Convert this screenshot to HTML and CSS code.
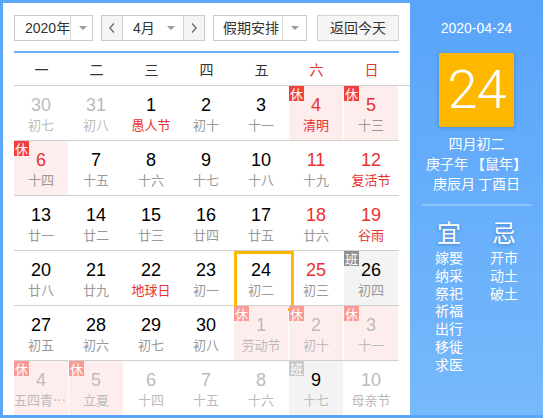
FILE: index.html
```html
<!DOCTYPE html>
<html lang="zh-CN">
<head>
<meta charset="utf-8">
<title>万年历</title>
<link rel="stylesheet" href="styles.css">
</head>
<body>
<div class="cal">
  <div class="main">
    <div class="toolbar">
      <div class="sel year"><span class="sel-text">2020年</span><span class="sel-arrow"><i class="caret"></i></span></div>
      <div class="month-group">
        <span class="nav"><svg width="6" height="10" viewBox="0 0 6 10"><polyline points="5,0.5 0.8,5 5,9.5" fill="none" stroke="#666" stroke-width="1.2"/></svg></span>
        <span class="month"><span class="m-text">4月</span><i class="caret"></i></span>
        <span class="nav"><svg width="6" height="10" viewBox="0 0 6 10"><polyline points="1,0.5 5.2,5 1,9.5" fill="none" stroke="#666" stroke-width="1.2"/></svg></span>
      </div>
      <div class="sel holiday"><span class="sel-text">假期安排</span><span class="sel-arrow"><i class="caret"></i></span></div>
      <div class="btn-today">返回今天</div>
    </div>
    <div class="rule"></div>
    <div class="weekdays">
      <span>一</span><span>二</span><span>三</span><span>四</span><span>五</span><span class="red">六</span><span class="red">日</span>
    </div>
    <div class="week">
      <div class="day other"><span class="num">30</span><span class="lunar">初七</span></div>
      <div class="day other"><span class="num">31</span><span class="lunar">初八</span></div>
      <div class="day fest"><span class="num">1</span><span class="lunar">愚人节</span></div>
      <div class="day"><span class="num">2</span><span class="lunar">初十</span></div>
      <div class="day"><span class="num">3</span><span class="lunar">十一</span></div>
      <div class="day rest wkend fest"><span class="badge">休</span><span class="num">4</span><span class="lunar">清明</span></div>
      <div class="day rest wkend"><span class="badge">休</span><span class="num">5</span><span class="lunar">十三</span></div>
    </div>
    <div class="week">
      <div class="day rest wkend"><span class="badge">休</span><span class="num">6</span><span class="lunar">十四</span></div>
      <div class="day"><span class="num">7</span><span class="lunar">十五</span></div>
      <div class="day"><span class="num">8</span><span class="lunar">十六</span></div>
      <div class="day"><span class="num">9</span><span class="lunar">十七</span></div>
      <div class="day"><span class="num">10</span><span class="lunar">十八</span></div>
      <div class="day wkend"><span class="num">11</span><span class="lunar">十九</span></div>
      <div class="day wkend fest"><span class="num">12</span><span class="lunar">复活节</span></div>
    </div>
    <div class="week">
      <div class="day"><span class="num">13</span><span class="lunar">廿一</span></div>
      <div class="day"><span class="num">14</span><span class="lunar">廿二</span></div>
      <div class="day"><span class="num">15</span><span class="lunar">廿三</span></div>
      <div class="day"><span class="num">16</span><span class="lunar">廿四</span></div>
      <div class="day"><span class="num">17</span><span class="lunar">廿五</span></div>
      <div class="day wkend"><span class="num">18</span><span class="lunar">廿六</span></div>
      <div class="day wkend fest"><span class="num">19</span><span class="lunar">谷雨</span></div>
    </div>
    <div class="week">
      <div class="day"><span class="num">20</span><span class="lunar">廿八</span></div>
      <div class="day"><span class="num">21</span><span class="lunar">廿九</span></div>
      <div class="day fest"><span class="num">22</span><span class="lunar">地球日</span></div>
      <div class="day"><span class="num">23</span><span class="lunar">初一</span></div>
      <div class="day today"><span class="num">24</span><span class="lunar">初二</span></div>
      <div class="day wkend"><span class="num">25</span><span class="lunar">初三</span></div>
      <div class="day work"><span class="badge">班</span><span class="num">26</span><span class="lunar">初四</span></div>
    </div>
    <div class="week">
      <div class="day"><span class="num">27</span><span class="lunar">初五</span></div>
      <div class="day"><span class="num">28</span><span class="lunar">初六</span></div>
      <div class="day"><span class="num">29</span><span class="lunar">初七</span></div>
      <div class="day"><span class="num">30</span><span class="lunar">初八</span></div>
      <div class="day other rest"><span class="badge">休</span><span class="num">1</span><span class="lunar">劳动节</span></div>
      <div class="day other rest"><span class="badge">休</span><span class="num">2</span><span class="lunar">初十</span></div>
      <div class="day other rest"><span class="badge">休</span><span class="num">3</span><span class="lunar">十一</span></div>
    </div>
    <div class="week last">
      <div class="day other rest"><span class="badge">休</span><span class="num">4</span><span class="lunar">五四青年节</span></div>
      <div class="day other rest"><span class="badge">休</span><span class="num">5</span><span class="lunar">立夏</span></div>
      <div class="day other"><span class="num">6</span><span class="lunar">十四</span></div>
      <div class="day other"><span class="num">7</span><span class="lunar">十五</span></div>
      <div class="day other"><span class="num">8</span><span class="lunar">十六</span></div>
      <div class="day other work"><span class="badge">班</span><span class="num">9</span><span class="lunar">十七</span></div>
      <div class="day other"><span class="num">10</span><span class="lunar">母亲节</span></div>
    </div>
  </div>
  <div class="panel">
    <div class="p-date">2020-04-24</div>
    <div class="p-big">24</div>
    <div class="p-lunar">
      <div>四月初二</div>
      <div>庚子年 【鼠年】</div>
      <div>庚辰月 丁酉日</div>
    </div>
    <div class="p-rule"></div>
    <div class="p-yiji">
      <div class="p-col">
        <div class="p-head">宜</div>
        <div class="p-item">嫁娶</div><div class="p-item">纳采</div><div class="p-item">祭祀</div><div class="p-item">祈福</div><div class="p-item">出行</div><div class="p-item">移徙</div><div class="p-item">求医</div>
      </div>
      <div class="p-col">
        <div class="p-head">忌</div>
        <div class="p-item">开市</div><div class="p-item">动土</div><div class="p-item">破土</div>
      </div>
    </div>
  </div>
</div>
</body>
</html>
```
FILE: styles.css
```css
* { box-sizing: border-box; }
html, body { margin: 0; padding: 0; background: #fff; }
body {
  font-family: "Liberation Sans", "Noto Sans CJK SC", sans-serif;
  color: #333;
}
.cal {
  display: flex;
  width: 543px;
  height: 418px;
  border: 3px solid #5ba6f8;
  border-right: 0;
}
.main {
  width: 407px;
  padding: 12px 0 0 11px;
  background: #fff;
}
.toolbar {
  display: flex;
  height: 26px;
  font-size: 14px;
  white-space: nowrap;
}
.sel, .month-group, .btn-today {
  display: flex;
  height: 26px;
  border: 1px solid #c9c9c9;
  background: #fff;
  line-height: 24px;
}
.sel-text { padding-left: 10px; white-space: nowrap; flex: 1; }
.year { width: 79px; margin-right: 8px; }
.sel-arrow {
  width: 24px;
  flex: none;
  border-left: 1px solid #dcdcdc;
  display: flex;
  align-items: center;
  justify-content: center;
}
.caret {
  display: block;
  width: 0; height: 0;
  border-left: 4px solid transparent;
  border-right: 4px solid transparent;
  border-top: 4px solid #999;
}
.month-group { width: 104px; margin-right: 8px; }
.nav {
  width: 21px;
  flex: none;
  background: #f5f5f5;
  display: flex;
  align-items: center;
  justify-content: center;
}
.nav:first-child { border-right: 1px solid #d6d6d6; }
.nav:last-child { border-left: 1px solid #d6d6d6; }
.month {
  flex: 1;
  display: flex;
  align-items: center;
  padding-left: 10px;
}
.m-text { width: 34px; }
.holiday { width: 94px; margin-right: 10px; }
.holiday .sel-text { padding-left: 9px; }
.btn-today {
  width: 82px;
  background: #f5f5f5;
  justify-content: center;
  border-color: #d2d2d2;
}
.rule {
  width: 385px;
  height: 2px;
  margin-top: 10px;
  background: #6aaef7;
}
.weekdays {
  display: grid;
  grid-template-columns: repeat(7, 55px);
  height: 33px;
  line-height: 32px;
  border-bottom: 1px solid #d0d0d0;
  font-size: 14px;
  text-align: center;
  color: #333;
  font-family: "Noto Sans CJK SC", sans-serif;
}
.weekdays .red { color: #e8312f; }
.week {
  display: grid;
  grid-template-columns: repeat(7, 55px);
  width: 385px;
  height: 55px;
  border-bottom: 1px solid #d0d0d0;
}
.week.last { border-bottom: 0; }
.day {
  position: relative;
  height: 54px;
  padding-top: 8px;
  border-right: 1px solid transparent;
  background-clip: padding-box;
  text-align: center;
  display: flex;
  flex-direction: column;
  align-items: center;
}
.num {
  display: block;
  font-size: 18px;
  line-height: 22px;
  color: #000;
}
.lunar {
  display: block;
  width: 100%;
  padding: 0;
  font-size: 13px;
  line-height: 18px;
  color: #999;
  white-space: nowrap;
  overflow: hidden;
  text-overflow: ellipsis;
  font-family: "Noto Sans CJK SC", sans-serif;
}
.wkend .num { color: #e8312f; }
.fest .lunar { color: #e8312f; }
.other .num { color: #bbb; }
.other .lunar { color: #bbb; }
.rest { background-color: #fdeeed; }
.work { background-color: #f3f3f3; }
.work .num { color: #000; }
.badge {
  position: absolute;
  left: 0;
  top: 0;
  width: 15px;
  height: 15px;
  line-height: 15px;
  font-size: 13px;
  text-align: center;
  color: #fff;
  background: #f2413a;
  font-family: "Noto Sans CJK SC", sans-serif;
}
.work .badge { background: #919191; }
.other .badge { background: #f99a94; }
.other.work .badge { background: #c9c9c9; }
.today::after {
  content: "";
  position: absolute;
  left: 0;
  top: 0;
  width: 54px;
  height: 54px;
  border: 3px solid #ffb800;
}
.panel {
  flex: 1;
  background: linear-gradient(#59a4fa, #76b9fb);
  color: #fff;
  text-align: center;
  font-family: "Noto Sans CJK SC", sans-serif;
  font-size: 14px;
  display: flex;
  flex-direction: column;
  align-items: center;
}
.p-date {
  margin-top: 15px;
  font-family: "Liberation Sans", sans-serif;
  font-size: 14px;
  line-height: 20px;
}
.p-big {
  margin-top: 15px;
  width: 75px;
  height: 74px;
  background: #ffb800;
  border-radius: 2px;
  box-shadow: 0 1px 4px rgba(0, 40, 100, 0.25);
  font-family: "Roboto", "Liberation Sans", sans-serif;
  font-weight: 300;
  font-size: 54px;
  line-height: 74px;
  letter-spacing: -1px;
}
.p-lunar {
  margin-top: 6px;
  line-height: 20px;
}
.p-rule {
  width: 110px;
  height: 2px;
  margin-top: 11px;
  background: #8cc3fb;
}
.p-yiji {
  display: flex;
  margin-top: 11px;
}
.p-col { width: 55px; text-align: center; }
.p-head {
  font-size: 24px;
  line-height: 30px;
  margin-bottom: 2px;
  text-shadow: 0 1px 3px rgba(0, 40, 100, 0.35);
}
.p-item {
  height: 17.8px;
  font-size: 14px;
  line-height: 17.8px;
}
```
